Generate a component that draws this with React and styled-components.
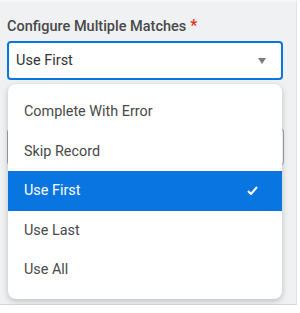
import styled, { createGlobalStyle } from 'styled-components';

const options = ['Complete With Error', 'Skip Record', 'Use First', 'Use Last', 'Use All'];
const selected = 'Use First';

const GlobalStyle = createGlobalStyle`
    html, body {
        margin: 0;
        padding: 0;
        background: #ffffff;
    }
    body {
        font-family: Roboto, "Liberation Sans", sans-serif;
    }
`;

const Panel = styled.div`
    width: 297px;
    height: 305px;
    box-sizing: border-box;
    background: #f0f1f3;
    border-right: 1px solid #e2e3e6;
    border-bottom: 1px solid #d6d7da;
    border-top: 2px solid #f7f7f8;
    padding: 15px 13px 0 7px;
    position: relative;
`;

const Label = styled.div`
    font-size: 14.5px;
    font-weight: 500;
    color: #494949;
    line-height: 18px;
    margin-bottom: 5px;

    span {
        color: #de2e21;
        margin-left: 4px;
        font-size: 16px;
    }
`;

const Field = styled.div`
    height: 39px;
    box-sizing: border-box;
    border: 2px solid #0875e1;
    border-radius: 4px;
    background: #ffffff;
    display: flex;
    align-items: center;
    justify-content: space-between;
    padding: 0 15px 0 7px;
    font-size: 14.5px;
    color: #333333;
`;

const Caret = styled.div`
    width: 0;
    height: 0;
    border-left: 4.5px solid transparent;
    border-right: 4.5px solid transparent;
    border-top: 6px solid #7b7b7b;
`;

const BackField = styled.div`
    height: 38px;
    box-sizing: border-box;
    margin-top: 48px;
    margin-right: -1px;
    border: 1px solid #a0a3a8;
    border-radius: 4px;
    background: #ffffff;
`;

const Menu = styled.div`
    position: absolute;
    top: 82px;
    left: 8px;
    width: 274px;
    background: #ffffff;
    border-radius: 8px;
    box-shadow: 0 2px 6px rgba(0, 0, 0, 0.22);
    padding: 8px 0 9px;
    box-sizing: border-box;
`;

const Item = styled.div`
    height: 39.5px;
    display: flex;
    align-items: center;
    justify-content: space-between;
    padding: 0 24px 0 16px;
    font-size: 14.4px;
    color: ${p => (p.$active ? '#ffffff' : '#494949')};
    background: ${p => (p.$active ? '#0875e1' : 'transparent')};
`;

export default function App() {
    return (
        <>
            <GlobalStyle />
            <Panel>
                <Label>Configure Multiple Matches<span>*</span></Label>
                <Field>
                    Use First
                    <Caret />
                </Field>
                <BackField />
                <Menu>
                    {options.map(opt => (
                        <Item key={opt} $active={opt === selected}>
                            {opt}
                            {opt === selected && (
                                <svg width="11" height="9" viewBox="0 0 11 9">
                                    <path d="M1 5 L4 8 L10 1" fill="none" stroke="#ffffff" strokeWidth="2" />
                                </svg>
                            )}
                        </Item>
                    ))}
                </Menu>
            </Panel>
        </>
    );
}
